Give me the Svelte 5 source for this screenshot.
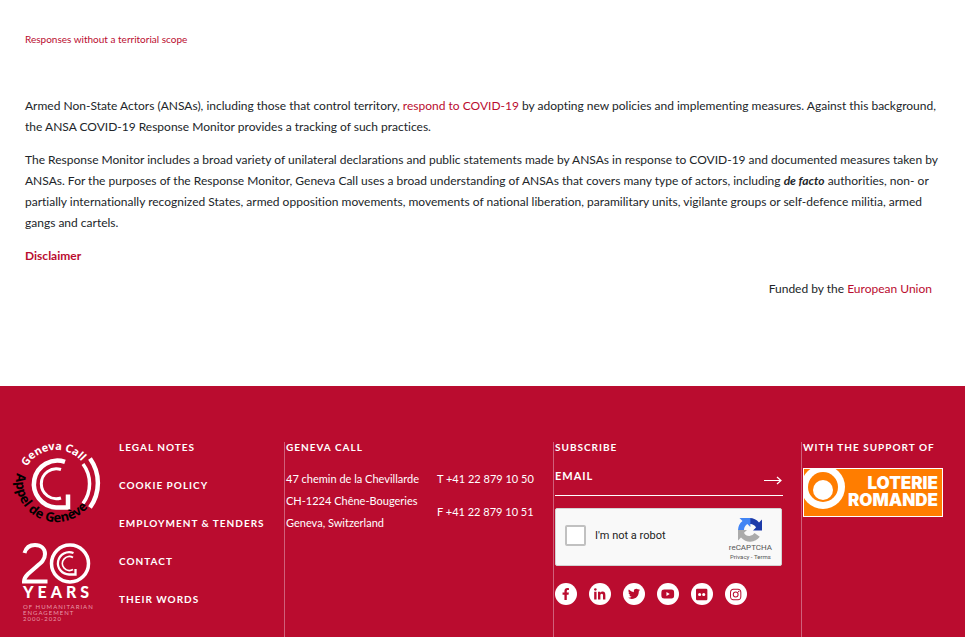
<script>
  const links = ['Legal notes', 'Cookie policy', 'Employment & Tenders', 'Contact', 'Their words'];
  const socials = [
    { name: 'Facebook', box: '0 0 320 512', h: 12, d: 'M279 288l14-93h-89v-60c0-25 12-50 52-50h41V7s-37-7-72-7c-73 0-121 44-121 125v70H23v93h81v224h100V288z' },
    { name: 'LinkedIn', box: '0 0 448 512', h: 13, d: 'M100 448H7V149h93zM53 108C24 108 0 84 0 54a54 54 0 0 1 107 0c0 30-24 54-54 54zM448 448h-93V302c0-34-1-79-48-79-49 0-56 38-56 77v148h-93V149h89v41h1c13-24 43-49 88-49 94 0 112 62 112 143z' },
    { name: 'Twitter', box: '0 0 512 512', h: 12, d: 'M459 152c0 4 0 9 0 14 0 138-105 298-298 298A296 296 0 0 1 0 417a213 213 0 0 0 155-44 105 105 0 0 1-98-72c16 2 31 2 47-2a105 105 0 0 1-84-103v-1c14 8 30 13 48 13A105 105 0 0 1 36 68a298 298 0 0 0 216 110C231 81 293 36 355 36c30 0 57 12 77 33 23-5 46-13 66-25-8 24-24 45-46 58 21-2 42-8 60-16-14 21-32 40-53 66z' },
    { name: 'YouTube', box: '0 0 576 512', h: 12, d: 'M550 124c-7-24-25-42-49-49C458 64 288 64 288 64S118 64 75 75c-24 7-42 25-49 49-11 43-11 132-11 132s0 90 11 133c7 23 25 41 49 48 43 11 213 11 213 11s170 0 213-11c24-7 42-25 49-48 11-43 11-133 11-133s0-89-11-132zM232 338V175l143 81z' },
    { name: 'Flickr', box: '0 0 448 512', h: 13, d: 'M400 32H48A48 48 0 0 0 0 80v352a48 48 0 0 0 48 48h352a48 48 0 0 0 48-48V80a48 48 0 0 0-48-48zM144 319a63 63 0 1 1 0-126 63 63 0 0 1 0 126zm160 0a63 63 0 1 1 0-126 63 63 0 0 1 0 126z' },
    { name: 'Instagram', box: '0 0 448 512', h: 13, d: 'M224 141a115 115 0 1 0 0 230 115 115 0 0 0 0-230zm0 190a75 75 0 1 1 0-150 75 75 0 0 1 0 150zM370 137a27 27 0 1 1-54 0 27 27 0 0 1 54 0zM446 164c-2-36-10-68-36-94s-58-34-94-36c-37-2-148-2-185 0-35 2-67 10-93 36S4 128 2 164c-2 37-2 148 0 185 2 36 10 67 36 93s58 35 93 36c37 2 148 2 185 0 36-1 68-10 94-36s34-57 36-93c2-37 2-148 0-185zm-48 225c-8 19-22 34-42 42-29 12-98 9-132 9s-103 3-132-9c-20-8-34-23-42-42-12-30-9-99-9-133s-3-103 9-132c8-20 22-35 42-43 29-11 98-9 132-9s103-2 132 9c20 8 34 23 42 43 12 29 9 98 9 132s3 103-9 133z' },
  ];
</script>

<div class="page">
  <main>
    <h1>Responses without a territorial scope</h1>
    <p>Armed Non-State Actors (ANSAs), including those that control territory, <a href="#respond">respond to COVID-19</a> by adopting new policies and implementing measures. Against this background, the ANSA COVID-19 Response Monitor provides a tracking of such practices.</p>
    <p>The Response Monitor includes a broad variety of unilateral declarations and public statements made by ANSAs in response to COVID-19 and documented measures taken by ANSAs. For the purposes of the Response Monitor, Geneva Call uses a broad understanding of ANSAs that covers many type of actors, including <strong><em>de facto</em></strong> authorities, non- or partially internationally recognized States, armed opposition movements, movements of national liberation, paramilitary units, vigilante groups or self-defence militia, armed gangs and cartels.</p>
    <p><a class="strong" href="#disclaimer">Disclaimer</a></p>
    <p class="funded">Funded by the <a href="#eu">European Union</a></p>
  </main>

  <footer>
    <div class="logos">
      <svg width="92" height="92" viewBox="0 0 92 92" role="img" aria-label="Geneva Call">
        <defs>
          <path id="arc-top" d="M12 46A34 34 0 0 1 80 46" />
          <path id="arc-bottom" d="M7 35A40.500 40.500 0 1 0 87 46" />
        </defs>
        <g fill="none" stroke="#fff">
          <path d="M55 23.800A23.500 23.500 0 1 0 46 69.500H58V56.500" stroke-width="4.500" />
          <path d="M51 31.500A15 15 0 1 0 51 60" stroke-width="3" />
          <path d="M73 26A33 33 0 0 1 73 65.500" stroke-width="3.500" />
          <path d="M80 20.500A42 42 0 0 1 80 69.500" stroke-width="4.500" />
        </g>
        <text class="round" fill="#fff"><textPath href="#arc-top" startOffset="18">Geneva Call</textPath></text>
        <text class="round lower" fill="#000"><textPath href="#arc-bottom" startOffset="0">Appel de Genève</textPath></text>
      </svg>
      <svg width="70" height="80" viewBox="0 0 70 80" role="img" aria-label="20 years of humanitarian engagement">
        <g fill="none" stroke="#fff">
          <path d="M2.500 10C4 4.500 8 2 13 2C19 2 23 5.500 23 11C23 17 19 20 14 24L6 31C3.500 33.500 2 35 2 38.500H25.500" stroke-width="4" />
          <circle cx="48" cy="20.500" r="18.500" stroke-width="3.500" />
          <path d="M51.500 10A11.200 11.200 0 1 0 47.500 31.500H53.500V26" stroke-width="2.300" />
          <path d="M51 14.500A7 7 0 1 0 51 26.500" stroke-width="1.800" />
        </g>
        <text class="years" x="1" y="55">YEARS</text>
        <g class="tiny">
          <text x="1" y="66">OF HUMANITARIAN</text>
          <text x="1" y="72">ENGAGEMENT</text>
          <text x="1" y="78">2000-2020</text>
        </g>
      </svg>
    </div>

    <nav>
      {#each links as link}
        <a href="#{link}">{link}</a>
      {/each}
    </nav>

    <section>
      <h2>Geneva Call</h2>
      <div class="contact">
        <address>47 chemin de la Chevillarde<br />CH-1224 Chêne-Bougeries<br />Geneva, Switzerland</address>
        <div class="phones">
          <span>T +41 22 879 10 50</span>
          <span>F +41 22 879 10 51</span>
        </div>
      </div>
    </section>

    <section>
      <h2>Subscribe</h2>
      <form class="email">
        <input type="email" placeholder="EMAIL" aria-label="Email" />
        <button type="button" aria-label="Subscribe">
          <svg width="18" height="9" viewBox="0 0 18 9"><path d="M0 4.500H17M13 1L17 4.500L13 8" fill="none" stroke="#fff" stroke-width="1.200" /></svg>
        </button>
      </form>
      <div class="captcha">
        <label><input type="checkbox" /> I'm not a robot</label>
        <div class="brand">
          <svg width="24" height="24" viewBox="0 0 64 64" aria-hidden="true">
            <path fill="#1c3aa9" d="M64 32V4l-8 8A32 32 0 0 0 31 0V16h4c6 1 10 4 13 9l-8 8H64z" />
            <path fill="#4285f4" d="M32 0H4l8 8A32 32 0 0 0 0 32H16c0-7 4-13 9-16l8 8V0z" />
            <path fill="#ababab" d="M0 32V60l8-8A32 32 0 0 0 58 50L44 40a16 16 0 0 1-28-1l8-7z" />
          </svg>
          <span class="name">reCAPTCHA</span>
          <span class="terms"><a href="#privacy">Privacy</a> - <a href="#terms">Terms</a></span>
        </div>
      </div>
      <div class="socials">
        {#each socials as s}
          <a href="#{s.name}" aria-label={s.name}>
            <svg viewBox={s.box} height={s.h}><path d={s.d} /></svg>
          </a>
        {/each}
      </div>
    </section>

    <section>
      <h2>With the support of</h2>
      <a class="sponsor" href="#loterie" aria-label="Loterie Romande">
        <svg width="140" height="49" viewBox="0 0 140 49">
          <rect x=".5" y=".5" width="139" height="48" fill="#ff7d00" stroke="#fff" />
          <svg x="1" y="1" width="60" height="47" viewBox="1 1 60 47">
            <circle cx="20" cy="19" r="22" fill="#fff" />
            <circle cx="20" cy="19" r="15" fill="#ff7d00" />
            <circle cx="20" cy="22" r="10" fill="#fff" />
          </svg>
          <text x="135" y="21" text-anchor="end">LOTERIE</text>
          <text x="135" y="38" text-anchor="end">ROMANDE</text>
        </svg>
      </a>
    </section>
  </footer>
</div>

<style>
  :global(body) { margin: 0; background: #fff; }
  .page {
    display: flex;
    flex-direction: column;
    min-height: 100vh;
    font: 12px/21px Lato, sans-serif;
    font-variant-ligatures: none;
    color: #212529;
  }
  a { color: #ba0c2f; text-decoration: none; }
  main { padding: 29px 24px 87px 25px; }
  h1 { margin: 0 0 45px; font-size: 10px; line-height: 21px; font-weight: 400; color: #ba0c2f; }
  p { margin: 0 0 12px; }
  .strong { font-weight: 700; }
  .funded { text-align: right; margin: 0 9px 0 0; }

  footer {
    flex: 1;
    display: grid;
    grid-template-columns: 119fr 165fr 269fr 248fr 164fr;
    padding-top: 56px;
    background: #ba0c2f;
    color: #fff;
  }
  footer > * { min-width: 0; }
  footer a { color: inherit; }
  .logos { display: flex; flex-direction: column; gap: 11px; padding-left: 10px; }
  .logos svg { margin-top: -4px; overflow: visible; }
  .logos svg + svg { margin: 2px 0 0 12px; }
  .round { font: 700 11px "Noto Sans", sans-serif; }
  .lower { font-size: 13px; }
  .years { font: 900 16px Lato, sans-serif; letter-spacing: 4px; fill: #fff; }
  .tiny { font: 400 6px Lato, sans-serif; letter-spacing: 1px; fill: #e79aaa; }

  nav { display: flex; flex-direction: column; gap: 27px; }
  nav a, h2 { margin: 0; font-size: 10px; line-height: 11px; font-weight: 700; letter-spacing: 1px; text-transform: uppercase; white-space: nowrap; }
  section { padding-left: 1px; border-left: 1px solid #d0607a; }
  .contact { display: flex; gap: 18px; margin-top: 15px; font-size: 11px; line-height: 22px; white-space: nowrap; }
  address { font-style: normal; }
  .phones { display: flex; flex-direction: column; gap: 11px; }

  .email { display: flex; align-items: center; height: 42px; margin: 0 18px 12px 0; border-bottom: 1px solid #fff; }
  .email input {
    flex: 1; min-width: 0; height: 20px; margin: 2px 0 0; padding: 0; border: 0; outline: 0;
    background: none; color: #fff; font: 700 11px Lato, sans-serif; letter-spacing: 1px;
  }
  .email input::placeholder { color: #fff; opacity: 1; }
  .email button { display: flex; margin-top: 12px; padding: 0 1px; border: 0; background: none; }
  .captcha {
    display: flex; align-items: center; justify-content: space-between; box-sizing: border-box;
    height: 58px; margin: 0 19px 17px 0; padding: 0 9px; border: 1px solid #d3d3d3; border-radius: 2px;
    background: #f9f9f9; color: #222; font-family: Roboto, sans-serif;
  }
  .captcha label { display: flex; align-items: center; gap: 9px; font-size: 11px; margin-bottom: 4px; }
  .captcha input { appearance: none; box-sizing: border-box; width: 21px; height: 21px; margin: 0; border: 2px solid #c1c1c1; border-radius: 2px; background: #fff; }
  .brand { display: flex; flex-direction: column; align-items: center; padding-top: 4px; color: #555; white-space: nowrap; }
  .name { font-size: 8px; line-height: 11px; }
  .terms { font-size: 6px; line-height: 8px; }
  .socials { display: flex; gap: 12px; }
  .socials a { display: flex; align-items: center; justify-content: center; width: 22px; height: 22px; border-radius: 50%; background: #fff; }
  .socials path { fill: #ba0c2f; }
  .sponsor { display: block; margin: 15px 0 0; }
  .sponsor svg { display: block; }
  .sponsor text { font: 900 17px Inter, sans-serif; fill: #fff; }
</style>
